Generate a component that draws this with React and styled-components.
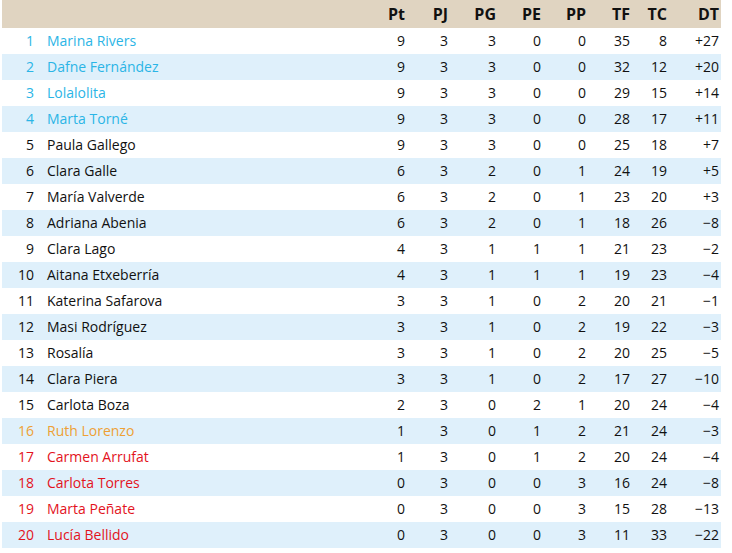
import styled, { createGlobalStyle } from "styled-components";

const GlobalStyle = createGlobalStyle`
  body {
    margin: 0;
    background: #ffffff;
    font-family: "Open Sans", "Noto Sans", sans-serif;
  }
`;

const rows = [
  ["Marina Rivers", 9, 3, 3, 0, 0, 35, 8, "+27"],
  ["Dafne Fernández", 9, 3, 3, 0, 0, 32, 12, "+20"],
  ["Lolalolita", 9, 3, 3, 0, 0, 29, 15, "+14"],
  ["Marta Torné", 9, 3, 3, 0, 0, 28, 17, "+11"],
  ["Paula Gallego", 9, 3, 3, 0, 0, 25, 18, "+7"],
  ["Clara Galle", 6, 3, 2, 0, 1, 24, 19, "+5"],
  ["María Valverde", 6, 3, 2, 0, 1, 23, 20, "+3"],
  ["Adriana Abenia", 6, 3, 2, 0, 1, 18, 26, "−8"],
  ["Clara Lago", 4, 3, 1, 1, 1, 21, 23, "−2"],
  ["Aitana Etxeberría", 4, 3, 1, 1, 1, 19, 23, "−4"],
  ["Katerina Safarova", 3, 3, 1, 0, 2, 20, 21, "−1"],
  ["Masi Rodríguez", 3, 3, 1, 0, 2, 19, 22, "−3"],
  ["Rosalía", 3, 3, 1, 0, 2, 20, 25, "−5"],
  ["Clara Piera", 3, 3, 1, 0, 2, 17, 27, "−10"],
  ["Carlota Boza", 2, 3, 0, 2, 1, 20, 24, "−4"],
  ["Ruth Lorenzo", 1, 3, 0, 1, 2, 21, 24, "−3"],
  ["Carmen Arrufat", 1, 3, 0, 1, 2, 20, 24, "−4"],
  ["Carlota Torres", 0, 3, 0, 0, 3, 16, 24, "−8"],
  ["Marta Peñate", 0, 3, 0, 0, 3, 15, 28, "−13"],
  ["Lucía Bellido", 0, 3, 0, 0, 3, 11, 33, "−22"],
];

const headers = ["Pt", "PJ", "PG", "PE", "PP", "TF", "TC", "DT"];
const widths = [36, 332, 37, 43, 48, 45, 45, 44, 37, 52];

function zoneOf(pos) {
  if (pos <= 4) return "top";
  if (pos === 16) return "warn";
  if (pos >= 17) return "down";
  return "mid";
}

export default function App() {
  return (
    <>
      <GlobalStyle />
      <Table>
        <colgroup>
          {widths.map((w, i) => (
            <col key={i} style={{ width: w }} />
          ))}
        </colgroup>
        <thead>
          <HeadRow>
            <th />
            <th />
            {headers.map((h) => (
              <HeadCell key={h}>{h}</HeadCell>
            ))}
          </HeadRow>
        </thead>
        <tbody>
          {rows.map(([name, ...stats], i) => {
            const pos = i + 1;
            const zone = zoneOf(pos);
            return (
              <Row key={name} $striped={i % 2 === 1}>
                <Rank $zone={zone}>{pos}</Rank>
                <Name $zone={zone}>{name}</Name>
                {stats.map((s, j) => (
                  <Stat key={j}>{s}</Stat>
                ))}
              </Row>
            );
          })}
        </tbody>
      </Table>
    </>
  );
}

const zoneColors = {
  top: "#2bb5e6",
  warn: "#eea034",
  down: "#e3131d",
  mid: "#111111",
};

const Table = styled.table`
  margin-left: 2px;
  width: 719px;
  table-layout: fixed;
  border-collapse: collapse;
  font-size: 14px;
  color: #111111;
`;

const HeadRow = styled.tr`
  height: 28px;
  background: #e0d4c1;
`;

const HeadCell = styled.th`
  font-size: 16px;
  font-weight: 700;
  text-align: right;
  padding: 0 2px 0 0;
  color: #111111;
`;

const Row = styled.tr`
  height: 26px;
  background: ${(p) => (p.$striped ? "#dff0fb" : "#ffffff")};

  td {
    padding-bottom: 2px;
  }
`;

const Rank = styled.td`
  text-align: right;
  padding: 0 4px 0 0;
  color: ${(p) => zoneColors[p.$zone]};
`;

const Name = styled.td`
  padding: 0 0 0 9px;
  white-space: nowrap;
  color: ${(p) => zoneColors[p.$zone]};
`;

const Stat = styled.td`
  text-align: right;
  padding: 0 2px 0 0;
`;
